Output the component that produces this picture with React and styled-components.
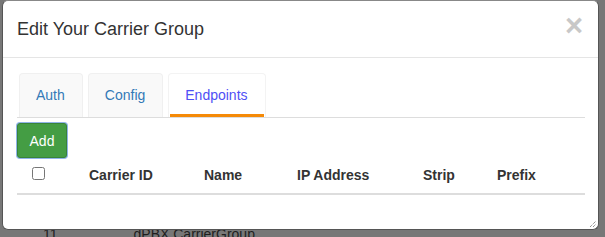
import React from 'react'
import styled, { createGlobalStyle } from 'styled-components'

const GlobalStyle = createGlobalStyle`
  html, body {
    margin: 0;
    padding: 0;
    background: #777;
    font-family: "Liberation Sans", Arial, sans-serif;
    font-size: 14px;
    color: #333;
    overflow: hidden;
  }
  * { box-sizing: border-box; }
`

const tabs = ['Auth', 'Config', 'Endpoints']
const columns = ['Carrier ID', 'Name', 'IP Address', 'Strip', 'Prefix']

const App = () => {
  const [active, setActive] = React.useState('Endpoints')

  return (
    <Page>
      <GlobalStyle />
      <Modal>
        <Header>
          <Title>Edit Your Carrier Group</Title>
          <Close aria-label="Close">×</Close>
        </Header>
        <Body>
          <TabBar>
            {tabs.map(t => (
              <Tab key={t} active={t === active} onClick={() => setActive(t)}>
                {t}
              </Tab>
            ))}
          </TabBar>
          <AddButton>Add</AddButton>
          <HeadRow>
            <HeadCell>
              <Check type="checkbox" />
            </HeadCell>
            {columns.map(c => (
              <HeadCell key={c}>{c}</HeadCell>
            ))}
          </HeadRow>
        </Body>
        <Resizer viewBox="0 0 8 8" width="8" height="8">
          <path d="M1 7 L7 1 M4 7 L7 4" stroke="#666" strokeWidth="1" strokeDasharray="1 1" />
        </Resizer>
      </Modal>
      <BehindRow>
        <span>11</span>
        <span>dPBX CarrierGroup</span>
      </BehindRow>
    </Page>
  )
}

export default App

const Page = styled.div`
  width: 605px;
  height: 237px;
  padding-left: 2px;
`

const Modal = styled.div`
  position: relative;
  z-index: 2;
  width: 597px;
  height: 230px;
  background: #fff;
  border: 1px solid #555;
  border-top-color: #888;
  border-radius: 6px;
  display: flex;
  flex-direction: column;
`

const Header = styled.div`
  display: flex;
  align-items: flex-start;
  justify-content: space-between;
  padding: 15px 15px 15px 14px;
  border-bottom: 1px solid #e5e5e5;
`

const Title = styled.h4`
  margin: 0;
  font-size: 18px;
  font-weight: normal;
  line-height: 26px;
  color: #333;
`

const Close = styled.button`
  border: 0;
  background: none;
  padding: 0;
  margin-top: -6px;
  font-family: "Liberation Sans", Arial, sans-serif;
  font-size: 31px;
  font-weight: bold;
  line-height: 1;
  color: #c8c8c8;
  cursor: pointer;
`

const Body = styled.div`
  padding: 15px 12px 0 14px;
  display: flex;
  flex-direction: column;
  align-items: flex-start;
`

const TabBar = styled.div`
  display: flex;
  gap: 5px;
  width: 568px;
  border-bottom: 1px solid #ddd;
  padding-left: 2px;
`

const Tab = styled.div`
  position: relative;
  padding: 11px 17px 12px 16px;
  line-height: 20px;
  font-size: 14px;
  color: ${p => (p.active ? '#4f4ff5' : '#337ab7')};
  background: ${p => (p.active ? '#fff' : '#f9f9f9')};
  border: 1px solid ${p => (p.active ? '#f3f3f3' : '#f0f0f0')};
  border-bottom: 0;
  border-radius: 4px 4px 0 0;
  cursor: pointer;

  &::after {
    content: '';
    display: ${p => (p.active ? 'block' : 'none')};
    position: absolute;
    left: 1px;
    right: 1px;
    bottom: 0;
    height: 3px;
    background: #f58a07;
  }
`

const AddButton = styled.button`
  margin-top: 5px;
  width: 50px;
  height: 35px;
  padding: 0;
  font-family: "Liberation Sans", Arial, sans-serif;
  font-size: 14px;
  color: #fff;
  background: #449d44;
  border: 1px solid #398439;
  border-radius: 3px;
  box-shadow: 0 0 0 1px #8fb4e8;
`

const HeadRow = styled.div`
  display: grid;
  grid-template-columns: 64px 115px 93px 126px 74px 96px;
  width: 568px;
  margin-top: -1px;
  border-bottom: 2px solid #ddd;
`

const HeadCell = styled.div`
  padding: 8px;
  line-height: 20px;
  font-weight: bold;
  color: #333;
  display: flex;
  align-items: center;

  &:first-child {
    padding-left: 15px;
  }
`

const Check = styled.input`
  margin: 0 0 4px 0;
  width: 13px;
  height: 13px;
`

const Resizer = styled.svg`
  position: absolute;
  right: 1px;
  bottom: 1px;
`

const BehindRow = styled.div`
  position: relative;
  z-index: 1;
  margin-top: -6px;
  padding-left: 41px;
  display: flex;
  gap: 76px;
  line-height: 20px;
  font-size: 14px;
  color: #1e1e1e;
`
